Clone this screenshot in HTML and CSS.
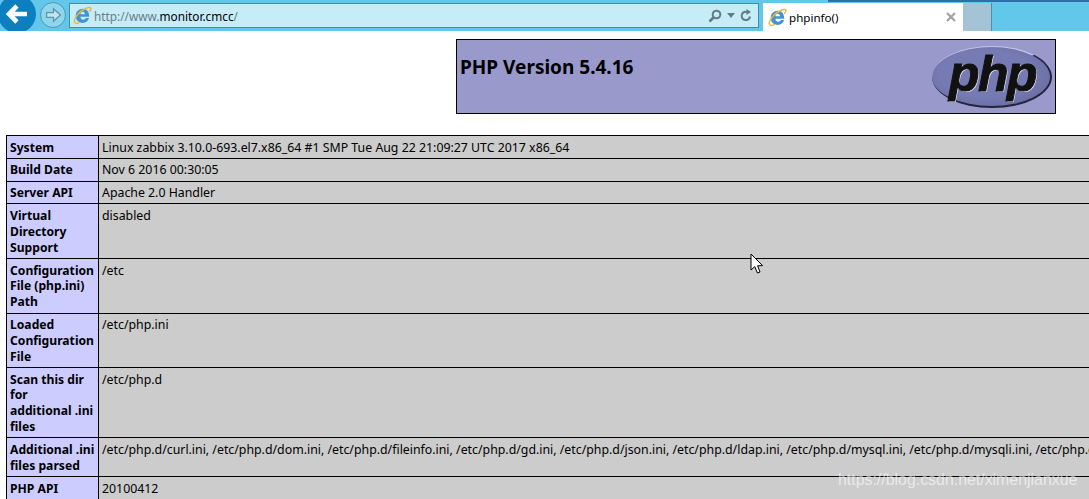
FILE: index.html
```html
<!DOCTYPE html>
<html>
<head>
    <meta charset="UTF-8">
    <title>phpinfo()</title>
    <link rel="stylesheet" href="styles.css">
</head>
<body>
    <div class="toolbar">
        <div class="nav-back">
            <svg width="22" height="20" viewBox="0 0 22 20"><path d="M11 2 L3 10 L11 18 M3 10 H21" fill="none" stroke="#fff" stroke-width="4.6"/></svg>
        </div>
        <div class="nav-forward">
            <svg width="17" height="16" viewBox="0 0 14 14"><path d="M1 5 H7 V1.5 L13 7 L7 12.5 V9 H1 Z" fill="#c4e4f0" stroke="#5f93a8" stroke-width="1.1"/></svg>
        </div>
        <div class="address">
            <svg class="ie-icon" width="19" height="19" viewBox="0 0 18 18">
                <use href="#ie"/>
            </svg>
            <span class="url"><span class="url-dim">http://www.</span>monitor.cmcc<span class="url-dim">/</span></span>
            <div class="address-tools">
                <svg width="14" height="14" viewBox="0 0 14 14"><circle cx="8.5" cy="5.5" r="3.8" fill="none" stroke="#607d87" stroke-width="2"/><path d="M5.5 8.5 L1.5 12.5" stroke="#607d87" stroke-width="2.6"/></svg>
                <svg width="8" height="5" viewBox="0 0 8 5"><path d="M0 0 H8 L4 5 Z" fill="#607d87"/></svg>
                <svg width="12" height="13" viewBox="0 0 12 13"><path d="M10 7.5 A4.2 4.2 0 1 1 7.5 3" fill="none" stroke="#607d87" stroke-width="2"/><path d="M6.5 0 L11 3 L6.5 6 Z" fill="#607d87"/></svg>
            </div>
        </div>
        <div class="tab">
            <svg class="ie-icon" width="19" height="19" viewBox="0 0 18 18">
                <defs>
                    <g id="ie">
                        <path d="M2.6 9.5 C2.6 5.3 5.6 2.6 9.2 2.6 C13 2.6 15.4 5.4 15.4 10.2 H7 C7.2 12 8.2 13 9.7 13 C10.9 13 11.7 12.4 12.2 11.4 H15.2 C14.4 14.2 12.2 16 9.2 16 C5.4 16 2.6 13.4 2.6 9.5 Z M7 7.9 H11.4 C11.3 6.4 10.6 5.5 9.2 5.5 C8 5.5 7.2 6.4 7 7.9 Z" fill="#3f94d8" fill-rule="evenodd"/>
                        <path d="M1.5 15.5 C0 12.5 6 5 11 2.8 C14 1.4 16.6 0.8 17 2 C17.2 3 16.2 4.6 15.4 5.6" fill="none" stroke="#f2b632" stroke-width="1.4"/>
                        <path d="M1.5 15.5 C2.2 17 4.6 16.6 6.4 15.4" fill="none" stroke="#f2b632" stroke-width="1.4"/>
                    </g>
                </defs>
                <use href="#ie"/>
            </svg>
            <span class="tab-title">phpinfo()</span>
            <svg class="tab-close" width="10" height="10" viewBox="0 0 10 10"><path d="M1 1 L9 9 M9 1 L1 9" stroke="#a2a2a2" stroke-width="2.2"/></svg>
        </div>
        <div class="new-tab"></div>
    </div>

    <div class="page">
        <div class="center">
            <div class="php-header">
                <h1 class="php-version">PHP Version 5.4.16</h1>
                <div class="php-logo"><span>php</span></div>
            </div>
        </div>

        <table class="info">
            <tr><td class="e">System</td><td class="v">Linux zabbix 3.10.0-693.el7.x86_64 #1 SMP Tue Aug 22 21:09:27 UTC 2017 x86_64</td></tr>
            <tr><td class="e">Build Date</td><td class="v">Nov 6 2016 00:30:05</td></tr>
            <tr><td class="e">Server API</td><td class="v">Apache 2.0 Handler</td></tr>
            <tr><td class="e">Virtual<br>Directory<br>Support</td><td class="v">disabled</td></tr>
            <tr><td class="e">Configuration<br>File (php.ini)<br>Path</td><td class="v">/etc</td></tr>
            <tr><td class="e">Loaded<br>Configuration<br>File</td><td class="v">/etc/php.ini</td></tr>
            <tr><td class="e">Scan this dir<br>for<br>additional .ini<br>files</td><td class="v">/etc/php.d</td></tr>
            <tr><td class="e">Additional .ini<br>files parsed</td><td class="v">/etc/php.d/curl.ini, /etc/php.d/dom.ini, /etc/php.d/fileinfo.ini, /etc/php.d/gd.ini, /etc/php.d/json.ini, /etc/php.d/ldap.ini, /etc/php.d/mysql.ini, /etc/php.d/mysqli.ini, /etc/php.d/pdo.ini</td></tr>
            <tr><td class="e">PHP API</td><td class="v">20100412</td></tr>
        </table>
    </div>

    <svg class="cursor" width="14" height="22" viewBox="0 0 14 22"><path d="M1 1 V17 L4.8 13.6 L7.4 20 L10 19 L7.6 12.8 L12.6 12.6 Z" fill="#fff" stroke="#000" stroke-width="1"/></svg>
    <div class="watermark">https://blog.csdn.net/ximenjianxue</div>
</body>
</html>
```

FILE: styles.css
```css
* {
    margin: 0;
    padding: 0;
    box-sizing: border-box;
}

html, body {
    width: 1089px;
    height: 499px;
    overflow: hidden;
}

body {
    background-color: #ffffff;
    color: #000000;
    font-family: 'Noto Sans', sans-serif;
    font-size: 12px;
    position: relative;
}

/* barre du navigateur */
.toolbar {
    height: 31px;
    background-color: #62c8ea;
    display: flex;
    align-items: flex-start;
    position: relative;
    overflow: hidden;
}

.toolbar::before {
    content: '';
    position: absolute;
    top: 0;
    left: 828px;
    right: 0;
    height: 2px;
    background: #2f6ea8;
}

.nav-back {
    width: 38px;
    height: 38px;
    margin: -5px 0 0 -2px;
    border-radius: 50%;
    background-color: #0b7fc0;
    display: flex;
    align-items: center;
    justify-content: center;
    flex-shrink: 0;
}

.nav-forward {
    width: 26px;
    height: 26px;
    margin: 2px 0 0 4px;
    border-radius: 50%;
    border: 1px solid #4f97b2;
    background-color: #8dd6ee;
    display: flex;
    align-items: center;
    justify-content: center;
    flex-shrink: 0;
}

.address {
    width: 690px;
    height: 25px;
    margin: 3px 0 0 3px;
    border: 1px solid #3f8fa8;
    background-color: #c6ecf7;
    display: flex;
    align-items: center;
    padding: 0 6px 0 3px;
    flex-shrink: 0;
}

.ie-icon {
    flex-shrink: 0;
}

.url {
    margin-left: 2px;
    font-size: 11.8px;
    color: #000000;
}

.url-dim {
    color: #6b7c84;
}

.address-tools {
    margin-left: auto;
    display: flex;
    align-items: center;
    gap: 5px;
}

.tab {
    width: 200px;
    height: 28px;
    margin: 3px 0 0 4px;
    background-color: #ffffff;
    display: flex;
    align-items: center;
    padding: 0 7px 0 5px;
    flex-shrink: 0;
}

.tab-title {
    margin-left: 2px;
    font-size: 11.6px;
}

.tab-close {
    margin-left: auto;
}

.new-tab {
    width: 29px;
    height: 28px;
    margin-top: 3px;
    background-color: #a4c3d4;
    border-right: 1px solid #4f8ea8;
    flex-shrink: 0;
}

/* contenu phpinfo */
.page {
    padding: 8px 0 0 6px;
}

.center {
    display: flex;
    padding-left: 450px;
}

.php-header {
    width: 600px;
    height: 75px;
    border: 1px solid #000000;
    background-color: #9999cc;
    display: flex;
    justify-content: space-between;
    flex-shrink: 0;
}

.php-version {
    font-size: 19px;
    font-weight: 700;
    line-height: 24px;
    margin: 15px 0 0 3px;
}

.php-logo {
    width: 120px;
    height: 62px;
    margin: 6px 3px 0 0;
    border-radius: 50%;
    background: radial-gradient(ellipse at 45% 45%, #777bb4 50%, #666a9f 85%, #585c8c 100%);
    border-bottom: 2px solid #23233a;
    border-right: 2px solid #23233a;
    border-top: 1px solid #c4c6e0;
    display: flex;
    align-items: center;
    justify-content: center;
}

.php-logo span {
    font-family: 'Liberation Sans', sans-serif;
    font-size: 50px;
    font-style: italic;
    font-weight: 700;
    line-height: 50px;
    letter-spacing: -1.5px;
    color: #111111;
    -webkit-text-stroke: 1px #111111;
    text-shadow: 1px 1px 0 #e4e4f2;
    margin: -6px 0 0 3px;
}

.info {
    margin-top: 21px;
    width: 1300px;
    border-collapse: collapse;
    table-layout: fixed;
    line-height: 15.85px;
}

.info td {
    border: 1px solid #000000;
    padding: 3.6px 3px 2.4px;
    vertical-align: top;
    white-space: nowrap;
}

.info .e {
    width: 92px;
    background-color: #ccccff;
    font-size: 12.15px;
    font-weight: 700;
}

.info .v {
    background-color: #cccccc;
    font-size: 12.33px;
}

.cursor {
    position: absolute;
    left: 750px;
    top: 253px;
}

.watermark {
    position: absolute;
    left: 838px;
    top: 471px;
    font-family: 'Liberation Sans', sans-serif;
    font-size: 15.9px;
    color: rgba(255, 255, 255, 0.6);
}
```
